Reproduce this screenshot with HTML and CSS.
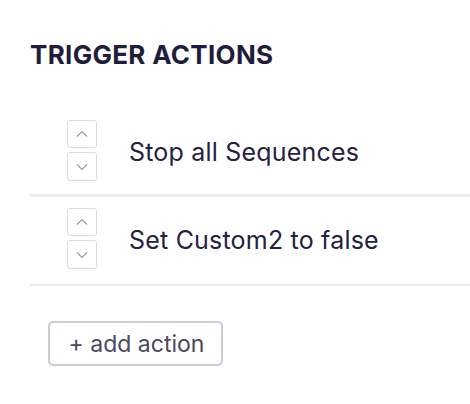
FILE: index.html
```html
<!DOCTYPE html>
<html>
<head>
<meta charset="utf-8">
<link rel="stylesheet" href="styles.css">
</head>
<body>
<section class="panel">
  <h2 class="title">TRIGGER ACTIONS</h2>
  <ul class="actions">
    <li class="action action-first">
      <div class="order">
        <button class="order-btn" aria-label="Move up"><svg viewBox="0 0 12 8" width="12" height="8"><path d="M1 6.5 L6 1.5 L11 6.5" fill="none" stroke="#9a9a9a" stroke-width="1.2"/></svg></button>
        <button class="order-btn" aria-label="Move down"><svg viewBox="0 0 12 8" width="12" height="8"><path d="M1 1.5 L6 6.5 L11 1.5" fill="none" stroke="#9a9a9a" stroke-width="1.2"/></svg></button>
      </div>
      <span class="label">Stop all Sequences</span>
    </li>
    <li class="action action-last">
      <div class="order">
        <button class="order-btn" aria-label="Move up"><svg viewBox="0 0 12 8" width="12" height="8"><path d="M1 6.5 L6 1.5 L11 6.5" fill="none" stroke="#9a9a9a" stroke-width="1.2"/></svg></button>
        <button class="order-btn" aria-label="Move down"><svg viewBox="0 0 12 8" width="12" height="8"><path d="M1 1.5 L6 6.5 L11 1.5" fill="none" stroke="#9a9a9a" stroke-width="1.2"/></svg></button>
      </div>
      <span class="label">Set Custom2 to false</span>
    </li>
  </ul>
  <button class="add">+ add action</button>
</section>
</body>
</html>
```

FILE: styles.css
```css
* { box-sizing: border-box; }
html, body { margin: 0; padding: 0; background: #fff; }
body { font-family: Inter, "Noto Sans", sans-serif; color: #24223f; }
.panel { padding: 40px 0 0 30px; }
.title {
  margin: 0;
  font-size: 26px;
  font-weight: 700;
  line-height: 30px;
  letter-spacing: 0.3px;
  color: #1f1d3b;
}
.actions { list-style: none; margin: 39px 0 0; padding: 0; }
.action {
  display: flex;
  align-items: center;
  padding: 11px 0 13px 37px;
  border-bottom: 3px solid #ececec;
}
.action-last { padding-bottom: 15px; border-bottom: 2px solid #ebebeb; }
.order { display: flex; flex-direction: column; gap: 4px; }
.order-btn {
  width: 30px;
  height: 28px;
  padding: 0;
  margin: 0;
  border: 1.5px solid #dcdcdc;
  border-radius: 3px;
  background: #fff;
  display: flex;
  align-items: center;
  justify-content: center;
}
.order-btn + .order-btn { height: 29px; }
.label {
  margin: 3px 0 0 32px;
  font-size: 25px;
  line-height: 30px;
  letter-spacing: 0.2px;
  color: #24223f;
}
.add {
  margin: 35px 0 0 18px;
  width: 175px;
  height: 45px;
  border: 2px solid #cdcbd5;
  border-radius: 5px;
  background: #fff;
  font-family: Inter, "Noto Sans", sans-serif;
  font-size: 23px;
  color: #4a475f;
  padding: 0 0 0 2px;
}
```
